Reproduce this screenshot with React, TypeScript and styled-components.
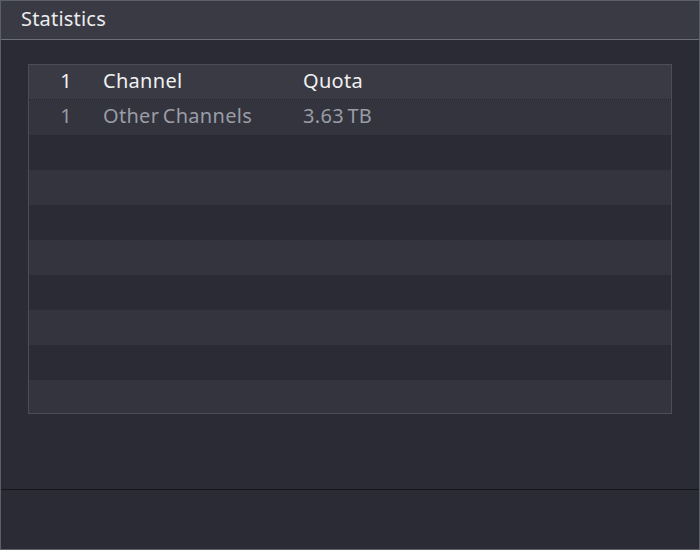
import * as React from "react";
import styled, { createGlobalStyle } from "styled-components";

const GlobalStyle = createGlobalStyle`
  html, body {
    margin: 0;
    padding: 0;
    background: #2a2b34;
  }
  body {
    font-family: "Noto Sans", "DejaVu Sans", sans-serif;
  }
`;

const Window = styled.div`
  box-sizing: border-box;
  width: 700px;
  height: 550px;
  display: flex;
  flex-direction: column;
  background: #2a2b34;
  border: 1px solid #5a5f68;
`;

const TitleBar = styled.div`
  box-sizing: border-box;
  height: 39px;
  flex: none;
  display: flex;
  align-items: center;
  padding: 0 0 3px 20px;
  background: #393a44;
  border-bottom: 1px solid #6b6f79;
  color: #ececec;
  font-size: 20px;
  letter-spacing: 0.2px;
`;

const Content = styled.div`
  flex: 1;
  padding: 24px 27px 0;
`;

const Table = styled.div`
  box-sizing: border-box;
  height: 350px;
  overflow: hidden;
  border: 1px solid #4b4d57;
  font-size: 20px;
  letter-spacing: 0.3px;
  word-spacing: -2px;
`;

const Row = styled.div<{ $head?: boolean; $light?: boolean }>`
  box-sizing: border-box;
  display: grid;
  grid-template-columns: 74px 200px 1fr;
  align-items: center;
  padding-bottom: 4px;
  height: 35px;
  background: ${(p) => (p.$head ? "#393a44" : p.$light ? "#33343e" : "#2a2b34")};
  color: ${(p) => (p.$head ? "#f0f0f0" : "#9a9da6")};
  border-bottom: ${(p) => (p.$head ? "1px dotted #24242b" : "none")};
`;

const Cell = styled.span<{ $center?: boolean }>`
  text-align: ${(p) => (p.$center ? "center" : "left")};
  white-space: nowrap;
`;

const Footer = styled.div`
  height: 59px;
  flex: none;
  border-top: 1px solid #15151c;
`;

const rows = [
  { no: "1", channel: "Other Channels", quota: "3.63 TB" },
  ...Array.from({ length: 8 }, () => ({ no: "", channel: "", quota: "" })),
];

export default function App() {
  return (
    <>
      <GlobalStyle />
      <Window>
        <TitleBar>Statistics</TitleBar>
        <Content>
          <Table>
            <Row $head>
              <Cell $center>1</Cell>
              <Cell>Channel</Cell>
              <Cell>Quota</Cell>
            </Row>
            {rows.map((r, i) => (
              <Row key={i} $light={i % 2 === 0}>
                <Cell $center>{r.no}</Cell>
                <Cell>{r.channel}</Cell>
                <Cell>{r.quota}</Cell>
              </Row>
            ))}
          </Table>
        </Content>
        <Footer />
      </Window>
    </>
  );
}
